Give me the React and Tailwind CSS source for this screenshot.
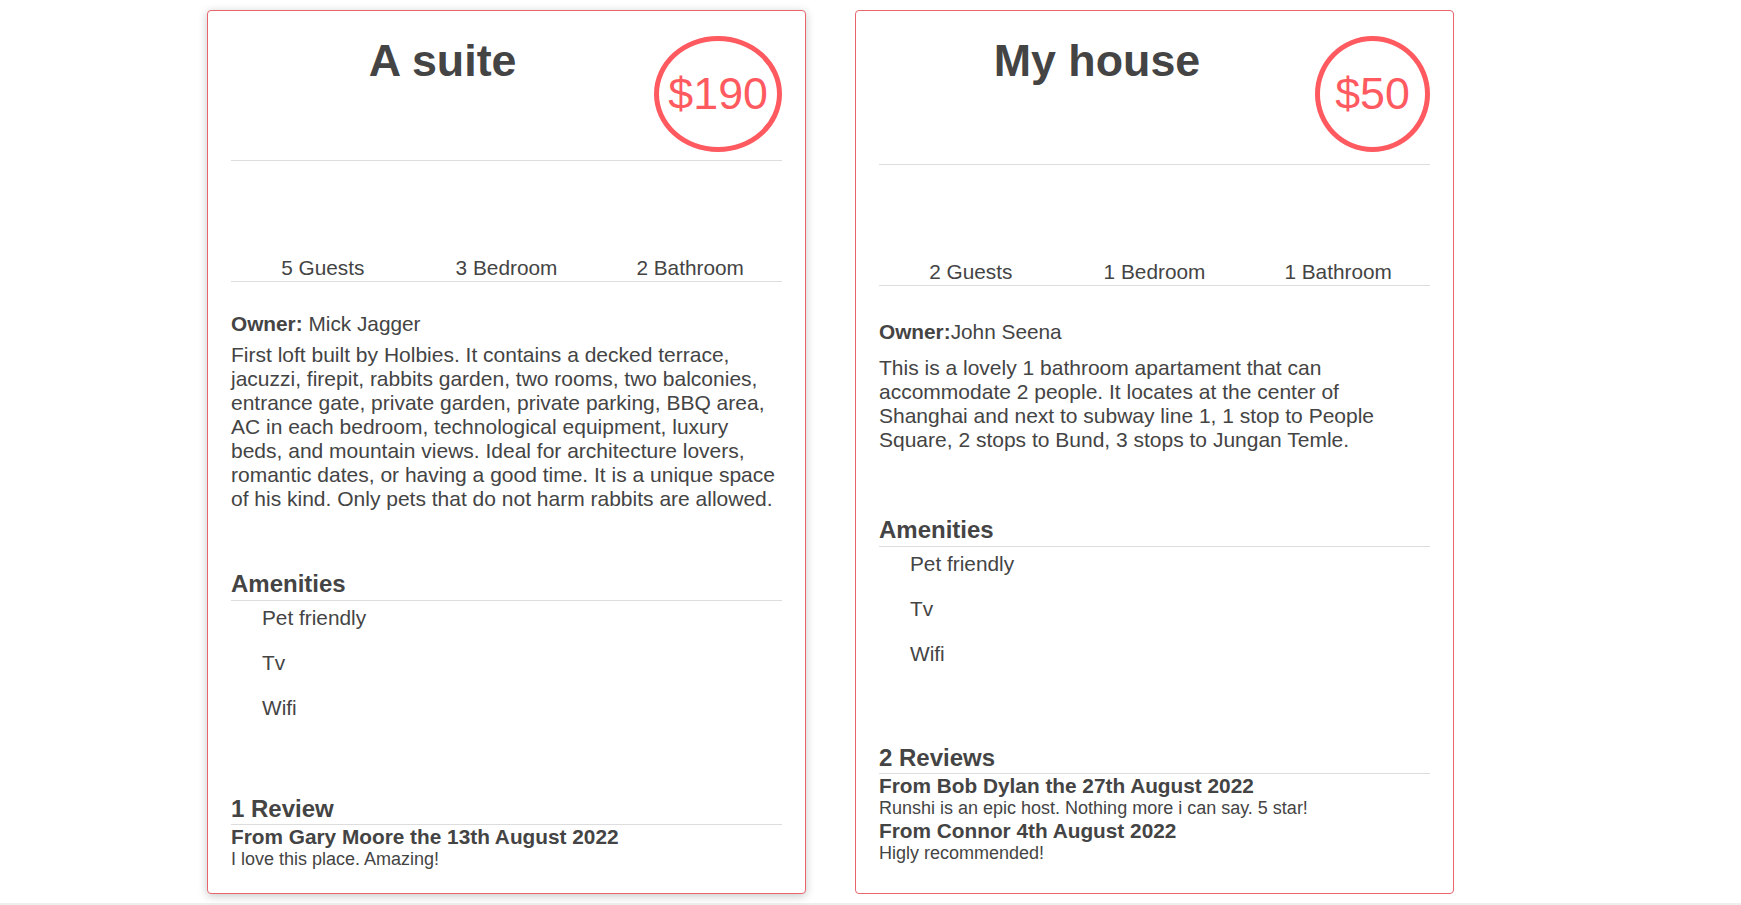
const PLACES = [
  {
    name: "A suite",
    price: 190,
    guests: 5,
    rooms: 3,
    baths: 2,
    owner: "Mick Jagger",
    ownerSep: " ",
    description:
      "First loft built by Holbies. It contains a decked terrace, jacuzzi, firepit, rabbits garden, two rooms, two balconies, entrance gate, private garden, private parking, BBQ area, AC in each bedroom, technological equipment, luxury beds, and mountain views. Ideal for architecture lovers, romantic dates, or having a good time. It is a unique space of his kind. Only pets that do not harm rabbits are allowed.",
    amenities: ["Pet friendly", "Tv", "Wifi"],
    reviews: [{ title: "From Gary Moore the 13th August 2022", text: "I love this place. Amazing!" }],
    hover: true,
    s: { hdr: "pb-[8px]", owner: "mt-[30px]", para: "mt-[7px]", amen: "mt-[59px]", rev: "mt-[75px]" },
  },
  {
    name: "My house",
    price: 50,
    guests: 2,
    rooms: 1,
    baths: 1,
    owner: "John Seena",
    ownerSep: "",
    description:
      "This is a lovely 1 bathroom apartament that can accommodate 2 people. It locates at the center of Shanghai and next to subway line 1, 1 stop to People Square, 2 stops to Bund, 3 stops to Jungan Temle.",
    amenities: ["Pet friendly", "Tv", "Wifi"],
    reviews: [
      { title: "From Bob Dylan the 27th August 2022", text: "Runshi is an epic host. Nothing more i can say. 5 star!" },
      { title: "From Connor 4th August 2022", text: "Higly recommended!" },
    ],
    hover: false,
    s: { hdr: "pb-[12px]", owner: "mt-[34px]", para: "mt-[12px]", amen: "mt-[64px]", rev: "mt-[78px]" },
  },
];

function Place({ p }) {
  return (
    <article
      className={`w-[599px] flex flex-col border border-[#e8646e] rounded-[4px] bg-white px-[23px] pb-[23px] ${
        p.hover ? "shadow-[0_2px_10px_rgba(0,0,0,0.22)]" : ""
      }`}
    >
      <div className={`flex items-start pt-[24px] border-b border-[#dddddd] ${p.s.hdr}`}>
        <h2 className="flex-1 text-center text-[44.8px] font-bold">{p.name}</h2>
        <div className="mt-[1px] min-w-[115px] h-[116px] px-[9px] flex items-center justify-center rounded-[50%] border-[5px] border-[#ff5a5f] text-[#ff5a5f] text-[44.8px]">
          <span className="mb-[2px]">${p.price}</span>
        </div>
      </div>

      <div className="h-[95px]" />

      <div className="grid grid-cols-3 text-center text-[20.8px] pb-[1px] border-b border-[#dddddd]">
        <div>{p.guests} Guests</div>
        <div>{p.rooms} Bedroom</div>
        <div>{p.baths} Bathroom</div>
      </div>

      <div className={`text-[20.8px] ${p.s.owner}`}>
        <b>Owner:</b>
        {p.ownerSep}
        {p.owner}
      </div>
      <p className={`text-[21px] ${p.s.para}`}>{p.description}</p>

      <h3 className={`text-[24px] font-bold pb-[2px] border-b border-[#dddddd] ${p.s.amen}`}>Amenities</h3>
      <ul className="mt-[5px] pl-[31px] flex flex-col gap-[20.8px] text-[20.8px]">
        {p.amenities.map((a) => (
          <li key={a}>{a}</li>
        ))}
      </ul>

      <h3 className={`text-[24px] font-bold pb-[1px] border-b border-[#dddddd] ${p.s.rev}`}>
        {p.reviews.length} {p.reviews.length === 1 ? "Review" : "Reviews"}
      </h3>
      <ul>
        {p.reviews.map((r) => (
          <li key={r.title}>
            <h4 className="text-[20.8px] font-bold">{r.title}</h4>
            <p className="text-[18px]">{r.text}</p>
          </li>
        ))}
      </ul>
    </article>
  );
}

export default function App() {
  return (
    <div className="min-h-[905px] bg-white text-[#444444] leading-[normal] font-[family-name:Liberation_Sans,Arial,sans-serif]">
      <section className="flex items-stretch gap-[49px] pl-[207px] pt-[10px] pb-[9px]">
        {PLACES.map((p) => (
          <Place key={p.name} p={p} />
        ))}
      </section>
      <footer className="h-[40px] bg-[#eeeeee]" />
    </div>
  );
}
